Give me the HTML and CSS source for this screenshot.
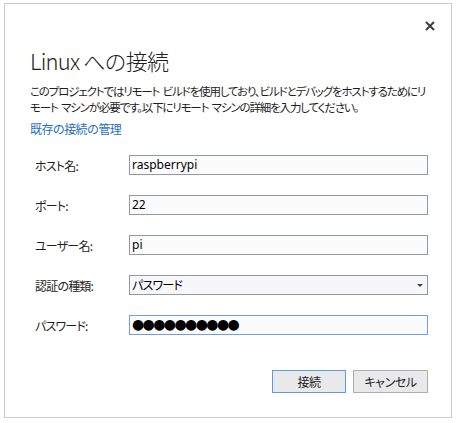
FILE: index.html
```html
<!DOCTYPE html>
<html lang="ja">
<head>
<meta charset="utf-8">
<link rel="stylesheet" href="styles.css">
</head>
<body>
<div class="dialog">
  <div class="topbar">
    <button class="close" aria-label="閉じる">
      <svg width="10" height="10" viewBox="0 0 10 10"><path d="M1 1 L9 9 M9 1 L1 9" stroke="#3c3c3c" stroke-width="2" fill="none"/></svg>
    </button>
  </div>
  <h1 class="title">Linux への接続</h1>
  <p class="desc">このプロジェクトではリモート ビルドを使用しており、ビルドとデバッグをホストするためにリ<br>モート マシンが必要です。以下にリモート マシンの詳細を入力してください。</p>
  <a class="link" href="#">既存の接続の管理</a>
  <div class="form">
    <label class="label">ホスト名:</label>
    <div class="field">raspberrypi</div>
    <label class="label">ポート:</label>
    <div class="field">22</div>
    <label class="label">ユーザー名:</label>
    <div class="field">pi</div>
    <label class="label">認証の種類:</label>
    <div class="field select"><span>パスワード</span><span class="arrow"></span></div>
    <label class="label">パスワード:</label>
    <div class="field focused dots">●●●●●●●●●●</div>
  </div>
  <div class="buttons">
    <button class="btn primary">接続</button>
    <button class="btn">キャンセル</button>
  </div>
</div>
</body>
</html>
```
FILE: styles.css
```css
html, body {
  margin: 0;
  padding: 0;
  background: #ffffff;
}
body {
  font-family: "Noto Sans", "Noto Sans CJK JP", sans-serif;
  color: #1e1e1e;
}
.dialog {
  box-sizing: border-box;
  margin: 3px 0 0 4px;
  width: 448px;
  height: 415px;
  border: 1px solid #cacad8;
  padding: 0 23px 0 25px;
  display: flex;
  flex-direction: column;
}
.topbar {
  display: flex;
  justify-content: flex-end;
  padding-top: 15px;
  height: 14px;
}
.close {
  border: none;
  background: none;
  padding: 0;
  margin-right: -9px;
  width: 14px;
  height: 14px;
  display: flex;
  align-items: center;
  justify-content: center;
}
.title {
  margin: 12px 0 0 0;
  font-family: "Noto Sans CJK JP", sans-serif;
  font-weight: 300;
  font-size: 22px;
  line-height: 30px;
  letter-spacing: -0.8px;
  color: #1e1e1e;
}
.desc {
  margin: 8px 0 0 0;
  font-family: "Noto Sans CJK JP", sans-serif;
  font-feature-settings: "palt";
  font-size: 11.5px;
  line-height: 16px;
  letter-spacing: -1.15px;
  word-spacing: 2px;
  white-space: nowrap;
}
.link {
  margin-top: 6px;
  font-family: "Noto Sans CJK JP", sans-serif;
  font-size: 12px;
  line-height: 16px;
  color: #1f6fc5;
  text-decoration: none;
  align-self: flex-start;
  letter-spacing: -0.6px;
}
.form {
  margin-top: 18px;
  padding-left: 5px;
  display: grid;
  grid-template-columns: 94px 1fr;
  row-gap: 20px;
  align-items: center;
}
.label {
  font-family: "Noto Sans CJK JP", sans-serif;
  font-feature-settings: "palt";
  font-size: 12px;
  letter-spacing: -0.8px;
  color: #1e1e1e;
}
.field {
  box-sizing: border-box;
  height: 20px;
  border: 1px solid #8e9aab;
  background: #fbfbfb;
  font-size: 12px;
  line-height: 18px;
  padding-left: 2px;
  color: #000;
}
.select {
  display: flex;
  justify-content: space-between;
  align-items: center;
  font-family: "Noto Sans CJK JP", sans-serif;
  font-feature-settings: "palt";
  letter-spacing: -0.8px;
  padding-right: 4px;
  background: #f7f7f9;
}
.arrow {
  width: 0;
  height: 0;
  border-left: 3px solid transparent;
  border-right: 3px solid transparent;
  border-top: 3px solid #444;
}
.focused {
  border-color: #6aa2e6;
}
.dots {
  font-family: "DejaVu Sans", sans-serif;
  font-size: 14px;
  letter-spacing: -1.6px;
  padding-left: 2px;
  line-height: 17px;
}
.buttons {
  margin-top: 35px;
  display: flex;
  justify-content: flex-end;
  gap: 7px;
}
.btn {
  box-sizing: border-box;
  width: 75px;
  height: 23px;
  border: 1px solid #adadad;
  background: #e9e9ec;
  font-family: "Noto Sans CJK JP", sans-serif;
  font-feature-settings: "palt";
  font-size: 12px;
  letter-spacing: -0.4px;
  color: #1e1e1e;
  padding: 0;
}
.primary {
  width: 74px;
  border-color: #5c9ce6;
}
```
